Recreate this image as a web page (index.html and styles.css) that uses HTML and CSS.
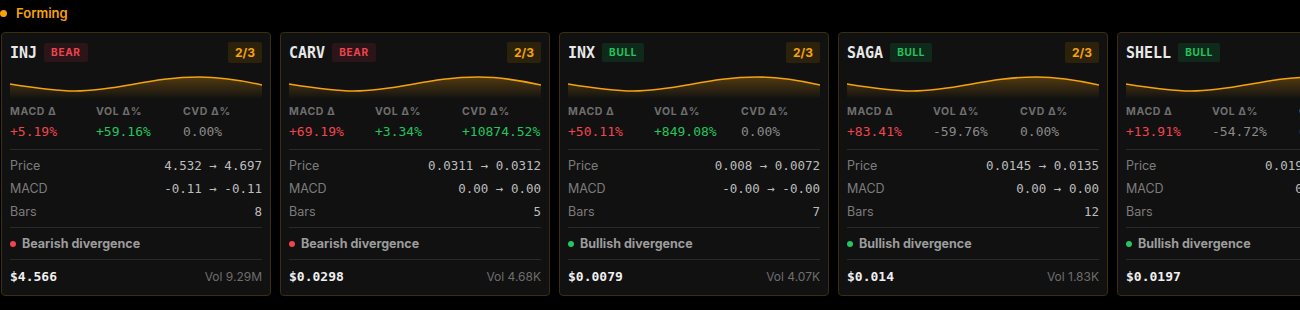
FILE: index.html
```html
<!DOCTYPE html>
<html lang="en">

<head>
    <meta charset="UTF-8">
    <meta name="viewport" content="width=device-width, initial-scale=1.0">
    <title>Forming</title>

    <link rel="stylesheet" href="styles.css">
</head>

<body>
    <!-- 共用漸層 -->
    <svg class="defs" width="0" height="0">
        <defs>
            <linearGradient id="sparkFill" x1="0" y1="0" x2="0" y2="1">
                <stop offset="0" stop-color="#f5a30b" stop-opacity="0.28" />
                <stop offset="1" stop-color="#f5a30b" stop-opacity="0.02" />
            </linearGradient>
        </defs>
    </svg>

    <div class="group-title"><span class="dot"></span>Forming</div>

    <div class="card-row">
        <div class="card">
            <div class="card-head">
                <span class="symbol">INJ</span>
                <span class="side bear">BEAR</span>
                <span class="stage">2/3</span>
            </div>
            <svg class="spark" viewBox="0 0 253 28" preserveAspectRatio="none">
                <path class="fill" d="M0,14 C25,18 45,21 65,21 C110,21 140,7 190,7 C215,7 235,11 253,15 L253,28 L0,28 Z" />
                <path class="line" d="M0,14 C25,18 45,21 65,21 C110,21 140,7 190,7 C215,7 235,11 253,15" />
            </svg>
            <div class="stats">
                <div class="stat"><span class="label">MACD Δ</span><span class="value up-red">+5.19%</span></div>
                <div class="stat"><span class="label">VOL Δ%</span><span class="value up-green">+59.16%</span></div>
                <div class="stat"><span class="label">CVD Δ%</span><span class="value flat">0.00%</span></div>
            </div>
            <div class="rows">
                <div class="row"><span>Price</span><span class="num">4.532 → 4.697</span></div>
                <div class="row"><span>MACD</span><span class="num">-0.11 → -0.11</span></div>
                <div class="row"><span>Bars</span><span class="num">8</span></div>
            </div>
            <div class="signal"><span class="sig-dot red"></span>Bearish divergence</div>
            <div class="card-foot">
                <span class="last">$4.566</span>
                <span class="vol">Vol 9.29M</span>
            </div>
        </div>

        <div class="card">
            <div class="card-head">
                <span class="symbol">CARV</span>
                <span class="side bear">BEAR</span>
                <span class="stage">2/3</span>
            </div>
            <svg class="spark" viewBox="0 0 253 28" preserveAspectRatio="none">
                <path class="fill" d="M0,14 C25,18 45,21 65,21 C110,21 140,7 190,7 C215,7 235,11 253,15 L253,28 L0,28 Z" />
                <path class="line" d="M0,14 C25,18 45,21 65,21 C110,21 140,7 190,7 C215,7 235,11 253,15" />
            </svg>
            <div class="stats">
                <div class="stat"><span class="label">MACD Δ</span><span class="value up-red">+69.19%</span></div>
                <div class="stat"><span class="label">VOL Δ%</span><span class="value up-green">+3.34%</span></div>
                <div class="stat"><span class="label">CVD Δ%</span><span class="value up-green">+10874.52%</span></div>
            </div>
            <div class="rows">
                <div class="row"><span>Price</span><span class="num">0.0311 → 0.0312</span></div>
                <div class="row"><span>MACD</span><span class="num">0.00 → 0.00</span></div>
                <div class="row"><span>Bars</span><span class="num">5</span></div>
            </div>
            <div class="signal"><span class="sig-dot red"></span>Bearish divergence</div>
            <div class="card-foot">
                <span class="last">$0.0298</span>
                <span class="vol">Vol 4.68K</span>
            </div>
        </div>

        <div class="card">
            <div class="card-head">
                <span class="symbol">INX</span>
                <span class="side bull">BULL</span>
                <span class="stage">2/3</span>
            </div>
            <svg class="spark" viewBox="0 0 253 28" preserveAspectRatio="none">
                <path class="fill" d="M0,14 C25,18 45,21 65,21 C110,21 140,7 190,7 C215,7 235,11 253,15 L253,28 L0,28 Z" />
                <path class="line" d="M0,14 C25,18 45,21 65,21 C110,21 140,7 190,7 C215,7 235,11 253,15" />
            </svg>
            <div class="stats">
                <div class="stat"><span class="label">MACD Δ</span><span class="value up-red">+50.11%</span></div>
                <div class="stat"><span class="label">VOL Δ%</span><span class="value up-green">+849.08%</span></div>
                <div class="stat"><span class="label">CVD Δ%</span><span class="value flat">0.00%</span></div>
            </div>
            <div class="rows">
                <div class="row"><span>Price</span><span class="num">0.008 → 0.0072</span></div>
                <div class="row"><span>MACD</span><span class="num">-0.00 → -0.00</span></div>
                <div class="row"><span>Bars</span><span class="num">7</span></div>
            </div>
            <div class="signal"><span class="sig-dot green"></span>Bullish divergence</div>
            <div class="card-foot">
                <span class="last">$0.0079</span>
                <span class="vol">Vol 4.07K</span>
            </div>
        </div>

        <div class="card">
            <div class="card-head">
                <span class="symbol">SAGA</span>
                <span class="side bull">BULL</span>
                <span class="stage">2/3</span>
            </div>
            <svg class="spark" viewBox="0 0 253 28" preserveAspectRatio="none">
                <path class="fill" d="M0,14 C25,18 45,21 65,21 C110,21 140,7 190,7 C215,7 235,11 253,15 L253,28 L0,28 Z" />
                <path class="line" d="M0,14 C25,18 45,21 65,21 C110,21 140,7 190,7 C215,7 235,11 253,15" />
            </svg>
            <div class="stats">
                <div class="stat"><span class="label">MACD Δ</span><span class="value up-red">+83.41%</span></div>
                <div class="stat"><span class="label">VOL Δ%</span><span class="value flat">-59.76%</span></div>
                <div class="stat"><span class="label">CVD Δ%</span><span class="value flat">0.00%</span></div>
            </div>
            <div class="rows">
                <div class="row"><span>Price</span><span class="num">0.0145 → 0.0135</span></div>
                <div class="row"><span>MACD</span><span class="num">0.00 → 0.00</span></div>
                <div class="row"><span>Bars</span><span class="num">12</span></div>
            </div>
            <div class="signal"><span class="sig-dot green"></span>Bullish divergence</div>
            <div class="card-foot">
                <span class="last">$0.014</span>
                <span class="vol">Vol 1.83K</span>
            </div>
        </div>

        <div class="card">
            <div class="card-head">
                <span class="symbol">SHELL</span>
                <span class="side bull">BULL</span>
                <span class="stage">2/3</span>
            </div>
            <svg class="spark" viewBox="0 0 253 28" preserveAspectRatio="none">
                <path class="fill" d="M0,14 C25,18 45,21 65,21 C110,21 140,7 190,7 C215,7 235,11 253,15 L253,28 L0,28 Z" />
                <path class="line" d="M0,14 C25,18 45,21 65,21 C110,21 140,7 190,7 C215,7 235,11 253,15" />
            </svg>
            <div class="stats">
                <div class="stat"><span class="label">MACD Δ</span><span class="value up-red">+13.91%</span></div>
                <div class="stat"><span class="label">VOL Δ%</span><span class="value flat">-54.72%</span></div>
                <div class="stat"><span class="label">CVD Δ%</span><span class="value flat">0.00%</span></div>
            </div>
            <div class="rows">
                <div class="row"><span>Price</span><span class="num">0.0199 → 0.0197</span></div>
                <div class="row"><span>MACD</span><span class="num">0.00 → 0.00</span></div>
                <div class="row"><span>Bars</span><span class="num">9</span></div>
            </div>
            <div class="signal"><span class="sig-dot green"></span>Bullish divergence</div>
            <div class="card-foot">
                <span class="last">$0.0197</span>
                <span class="vol">Vol 2.11K</span>
            </div>
        </div>
    </div>
</body>

</html>
```

FILE: styles.css
```css
body {
    margin: 0;
    background: #000000;
    font-family: Inter, "Noto Sans", sans-serif;
    color: #d6d6d6;
    overflow: hidden;
}

.defs {
    position: absolute;
}

.group-title {
    display: flex;
    align-items: center;
    gap: 9px;
    height: 26px;
    font-size: 13px;
    font-weight: 600;
    color: #f5a30b;
}

.group-title .dot {
    width: 7px;
    height: 7px;
    border-radius: 50%;
    background-color: #f5a30b;
}

.card-row {
    display: flex;
    gap: 9px;
    padding: 6px 0 0 1px;
}

.card {
    flex: 0 0 270px;
    min-width: 0;
    box-sizing: border-box;
    height: 264px;
    padding: 9px 8px 3px;

    background-color: #111111;
    border: 1px solid #3a2d10;
    border-radius: 4px;
}

/* 標題列 */
.card-head {
    display: flex;
    align-items: center;
    height: 21px;
}

.symbol {
    font-family: "DejaVu Sans Mono", "Liberation Mono", monospace;
    font-size: 15px;
    font-weight: 700;
    color: #e8e8e8;
}

.side {
    margin-left: 7px;
    padding: 0 7px;
    height: 19px;
    line-height: 19px;
    border-radius: 2px;
    font-size: 10px;
    font-weight: 700;
    letter-spacing: 0.7px;
}

.side.bear {
    background-color: #2b1518;
    color: #f0444f;
}

.side.bull {
    background-color: #0f2a1b;
    color: #22c55e;
}

.stage {
    margin-left: auto;
    padding: 0 7px;
    height: 21px;
    line-height: 21px;
    border-radius: 2px;
    background-color: #2c220b;
    color: #f5a30b;
    font-size: 12px;
    font-weight: 700;
}

/* 走勢圖 */
.spark {
    display: block;
    width: 100%;
    height: 28px;
    margin-top: 7px;
}

.spark .line {
    fill: none;
    stroke: #f5a30b;
    stroke-width: 1.6;
}

.spark .fill {
    fill: url(#sparkFill);
}

.stats {
    display: grid;
    grid-template-columns: 86px 87px 1fr;
    padding: 7px 0 8px;
    border-bottom: 1px solid #2a2a2a;
}

.stat .label {
    display: block;
    height: 14px;
    line-height: 14px;
    font-size: 10.5px;
    font-weight: 700;
    letter-spacing: 0.6px;
    color: #6e6e6e;
}

.stat .value {
    display: block;
    margin-top: 4px;
    height: 18px;
    line-height: 18px;
    font-family: "DejaVu Sans Mono", "Liberation Mono", monospace;
    font-size: 13px;
    white-space: nowrap;
}

.up-red {
    color: #f0444f;
}

.up-green {
    color: #22c55e;
}

.flat {
    color: #8a8a8a;
}

.rows {
    padding: 4px 0;
    border-bottom: 1px solid #2a2a2a;
}

.row {
    display: flex;
    justify-content: space-between;
    height: 23px;
    line-height: 23px;
    font-size: 12.5px;
    color: #7d7d7d;
}

.row .num {
    font-family: "DejaVu Sans Mono", "Liberation Mono", monospace;
    font-size: 12.5px;
    color: #bdbdbd;
}

.signal {
    display: flex;
    align-items: center;
    gap: 6px;
    height: 31px;
    font-size: 12.5px;
    font-weight: 700;
    color: #9c9c9c;
    border-bottom: 1px solid #2a2a2a;
}

.sig-dot {
    width: 6px;
    height: 6px;
    border-radius: 50%;
}

.sig-dot.red {
    background-color: #f0444f;
}

.sig-dot.green {
    background-color: #22c55e;
}

.card-foot {
    display: flex;
    justify-content: space-between;
    align-items: center;
    height: 32px;
}

.last {
    font-family: "DejaVu Sans Mono", "Liberation Mono", monospace;
    font-size: 13px;
    font-weight: 700;
    color: #f0f0f0;
}

.vol {
    font-size: 12px;
    color: #6e6e6e;
}
```
